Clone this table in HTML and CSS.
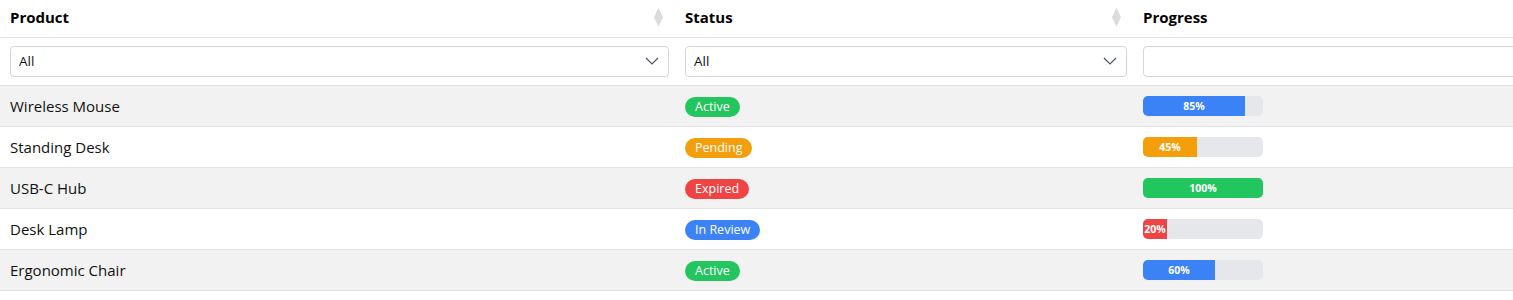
FILE: index.html
```html
<!DOCTYPE html>
<html lang="en">
<head>
<meta charset="utf-8">
<title>Products</title>
<link rel="stylesheet" href="styles.css">
</head>
<body>
<div class="wrap">
  <table class="grid">
    <colgroup>
      <col class="c1"><col class="c2"><col class="c3">
    </colgroup>
    <thead>
      <tr class="head">
        <th><div class="th"><span>Product</span><span class="sort"></span></div></th>
        <th><div class="th"><span>Status</span><span class="sort"></span></div></th>
        <th><div class="th"><span>Progress</span><span class="sort"></span></div></th>
      </tr>
      <tr class="filters">
        <td><div class="select"><span>All</span><svg width="14" height="8" viewBox="0 0 14 8"><path d="M1 1l6 6 6-6" fill="none" stroke="#4b5563" stroke-width="1.2"/></svg></div></td>
        <td><div class="select"><span>All</span><svg width="14" height="8" viewBox="0 0 14 8"><path d="M1 1l6 6 6-6" fill="none" stroke="#4b5563" stroke-width="1.2"/></svg></div></td>
        <td><div class="input"></div></td>
      </tr>
    </thead>
    <tbody>
      <tr class="odd">
        <td>Wireless Mouse</td>
        <td><span class="badge green">Active</span></td>
        <td><div class="bar"><div class="fill blue" style="width:85%">85%</div></div></td>
      </tr>
      <tr>
        <td>Standing Desk</td>
        <td><span class="badge amber">Pending</span></td>
        <td><div class="bar"><div class="fill amber" style="width:45%">45%</div></div></td>
      </tr>
      <tr class="odd">
        <td>USB-C Hub</td>
        <td><span class="badge red">Expired</span></td>
        <td><div class="bar"><div class="fill green" style="width:100%">100%</div></div></td>
      </tr>
      <tr>
        <td>Desk Lamp</td>
        <td><span class="badge blue">In Review</span></td>
        <td><div class="bar"><div class="fill red" style="width:20%">20%</div></div></td>
      </tr>
      <tr class="odd">
        <td>Ergonomic Chair</td>
        <td><span class="badge green">Active</span></td>
        <td><div class="bar"><div class="fill blue" style="width:60%">60%</div></div></td>
      </tr>
    </tbody>
  </table>
</div>
</body>
</html>
```

FILE: styles.css
```css
* { box-sizing: border-box; }
html, body { margin: 0; padding: 0; background: #fff; }
body {
  font-family: "Open Sans", "Noto Sans", sans-serif;
  font-size: 14px;
  color: #111;
}
.wrap { width: 100%; overflow: hidden; }
.grid {
  border-collapse: collapse;
  table-layout: fixed;
  width: 1591px;
}
.c1 { width: 675px; }
.c2 { width: 458px; }
.c3 { width: 458px; }
.grid th, .grid td {
  padding: 0 6px 0 10px;
  border-bottom: 1px solid #e3e3e6;
  text-align: left;
  vertical-align: middle;
}
.head th { height: 37px; font-weight: 700; font-size: 15px; color: #000; padding-bottom: 2px; }
.th { display: flex; align-items: center; justify-content: space-between; }
.sort {
  width: 9px; height: 19px; margin-right: 6px;
  background: #dcdcdc;
  clip-path: polygon(50% 0, 100% 50%, 50% 100%, 0 50%);
}
.filters td { height: 48px; }
.select, .input {
  height: 31px;
  border: 1px solid #d4d6db;
  border-radius: 4px;
  background: #fff;
}
.select {
  display: flex; align-items: center; justify-content: space-between;
  padding: 0 9px 0 8px;
  font-size: 13.5px; color: #111;
}
.grid tbody td { height: 41px; font-size: 15px; }
tr.odd td { background: #f2f2f2; }
.badge {
  display: inline-block;
  height: 20px; line-height: 20px;
  padding: 0 10px;
  border-radius: 10px;
  color: #fff;
  font-size: 12.5px;
}
.green { background: #22c55e; }
.amber { background: #f59e0b; }
.red { background: #ef4444; }
.blue { background: #3b82f6; }
.bar {
  width: 120px; height: 20px;
  background: #e5e7eb;
  border-radius: 5px;
  overflow: hidden;
  display: flex;
}
.fill {
  height: 100%;
  color: #fff;
  font-size: 10.5px; font-weight: 700;
  display: flex; align-items: center; justify-content: center;
  white-space: nowrap;
}
```
